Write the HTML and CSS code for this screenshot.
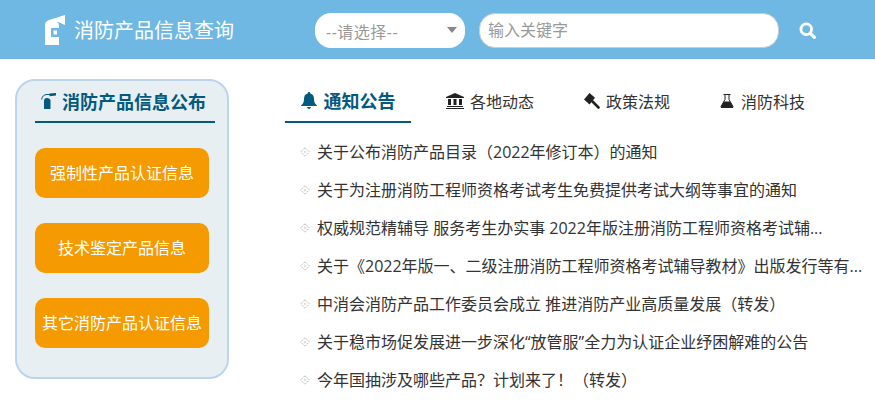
FILE: index.html
```html
<!DOCTYPE html>
<html lang="zh-CN">
<head>
    <meta charset="UTF-8">
    <title>消防产品信息查询</title>
    <link rel="stylesheet" href="styles.css">
</head>
<body>
<svg class="defs" width="0" height="0">
    <symbol id="dot" viewBox="0 0 10 10">
        <path fill="none" stroke="#b5b5b5" stroke-dasharray="1.500 1" d="M5 .7L9.300 5 5 9.300 .7 5Z"/>
        <path fill="#ddd" d="M5 3.500L6.500 5 5 6.500 3.500 5Z"/>
    </symbol>
</svg>
<header class="header">
    <div class="logo">
        <svg class="logo-icon" width="20" height="30" viewBox="0 0 20 30">
            <path fill="#fff" d="M0 30V10Q0 6.500 4 5L20 0V10L12 6.500Q14 8 14 11V30Z"/>
            <path fill="#6fb8e3" d="M6 13H14V22H6Z"/>
            <path fill="#fff" d="M8.500 15.500H12V19.500H8.500Z"/>
        </svg>
        <span class="logo-text">消防产品信息查询</span>
    </div>
    <div class="select-box">
        <span>--请选择--</span>
        <i class="caret"></i>
    </div>
    <input class="search-input" type="text" placeholder="输入关键字">
    <svg class="search-icon" width="17" height="17" viewBox="0 0 16 16">
        <circle cx="6.800" cy="6.800" r="5" fill="none" stroke="#fff" stroke-width="2.600"/>
        <path d="M10.500 10.500L14.500 14.500" stroke="#fff" stroke-width="3" stroke-linecap="round"/>
    </svg>
</header>

<div class="content">
    <aside class="side-card">
        <h2 class="side-title">
            <svg width="15" height="17" viewBox="0 0 15 17">
                <path fill="#04597f" d="M3 16V7.500Q3 5 6 5T9.500 7.500V16Z"/>
                <path fill="none" stroke="#04597f" d="M.6 6.500Q1.500 1.500 6 1.500H9"/>
                <path fill="#04597f" d="M8.500 .5L15 0V2.500L8.500 3.200Z"/>
            </svg>
            消防产品信息公布
        </h2>
        <a class="side-btn">强制性产品认证信息</a>
        <a class="side-btn">技术鉴定产品信息</a>
        <a class="side-btn">其它消防产品认证信息</a>
    </aside>

    <main class="main">
        <nav class="tabs">
            <a class="tab active">
                <svg width="16" height="17" viewBox="0 0 16 17">
                    <path fill="#04597f" d="M8 0Q9.300 0 9.300 1.400Q13 2.200 13 7Q13 11.500 16 13.500V14H0V13.500Q3 11.500 3 7Q3 2.200 6.700 1.400Q6.700 0 8 0ZM6 15H10Q9.500 17 8 17T6 15Z"/>
                </svg>
                通知公告
            </a>
            <a class="tab tab-2">
                <svg width="18" height="16" viewBox="0 0 18 16">
                    <path fill="#222" d="M9 0L18 4V5H0V4ZM2 6H5V12H2ZM7.500 6H10.500V12H7.500ZM13 6H16V12H13ZM1 13H17V14H1ZM0 15H18V16H0Z"/>
                </svg>
                各地动态
            </a>
            <a class="tab tab-3">
                <svg width="16" height="16" viewBox="0 0 16 16">
                    <path fill="#222" d="M0 6.500L5.500 0 11 4.800 5.500 11.500Z"/>
                    <path fill="none" stroke="#222" stroke-width="2.600" stroke-linecap="round" d="M8.500 8.500L14.500 14.500"/>
                </svg>
                政策法规
            </a>
            <a class="tab tab-4">
                <svg width="14" height="14" viewBox="0 0 14 14">
                    <path fill="none" stroke="#222" d="M3.500 .5H10.500M5 1V5.500L1 12.500Q.8 13.500 1.500 13.500H12.500Q13.200 13.500 13 12.500L9 5.500V1"/>
                    <path fill="#222" d="M3.800 7.500H10.200L13 13V14H1V13Z"/>
                </svg>
                消防科技
            </a>
        </nav>
        <ul class="news">
            <li><svg class="dot"><use href="#dot"/></svg><a>关于公布消防产品目录（2022年修订本）的通知</a></li>
            <li><svg class="dot"><use href="#dot"/></svg><a>关于为注册消防工程师资格考试考生免费提供考试大纲等事宜的通知</a></li>
            <li><svg class="dot"><use href="#dot"/></svg><a>权威规范精辅导 服务考生办实事 2022年版注册消防工程师资格考试辅...</a></li>
            <li><svg class="dot"><use href="#dot"/></svg><a>关于《2022年版一、二级注册消防工程师资格考试辅导教材》出版发行等有...</a></li>
            <li><svg class="dot"><use href="#dot"/></svg><a>中消会消防产品工作委员会成立 推进消防产业高质量发展（转发）</a></li>
            <li><svg class="dot"><use href="#dot"/></svg><a>关于稳市场促发展进一步深化“放管服”全力为认证企业纾困解难的公告</a></li>
            <li><svg class="dot"><use href="#dot"/></svg><a>今年国抽涉及哪些产品？计划来了！（转发）</a></li>
        </ul>
    </main>
</div>
</body>
</html>
```

FILE: styles.css
```css
* {
    box-sizing: border-box;
}
html, body {
    height: 100%;
    overflow: hidden;
}
body {
    margin: 0;
    background-color: #fff;
    font-family: "Open Sans", "Noto Sans CJK SC", sans-serif;
    color: #333;
}
.defs {
    display: block;
}
.header {
    display: flex;
    align-items: center;
    height: 59px;
    background-color: #6fb8e3;
}
.logo {
    display: flex;
    align-items: center;
    width: 315px;
    padding-left: 45px;
    color: #fff;
}
.logo-icon {
    margin-right: 9px;
}
.logo-text {
    font-size: 20px;
    margin-top: -1px;
}
.select-box {
    position: relative;
    display: flex;
    align-items: center;
    width: 150px;
    height: 35px;
    padding: 2px 0 0 11px;
    margin-top: 1px;
    background-color: #fff;
    border-radius: 16px;
    font-size: 16px;
    letter-spacing: .5px;
    color: #999;
}
.caret {
    position: absolute;
    right: 8px;
    top: 14px;
    border-left: 5px solid transparent;
    border-right: 5px solid transparent;
    border-top: 6px solid #888;
}
.search-input {
    width: 300px;
    height: 35px;
    margin-left: 14px;
    margin-top: 1px;
    padding: 0 8px;
    border: 1px solid #ccc;
    border-radius: 16px;
    outline: none;
    font-family: inherit;
    font-size: 16px;
    color: #555;
}
.search-input::placeholder {
    color: #999;
}
.search-icon {
    margin-left: 20px;
    margin-top: 2px;
}
.content {
    display: flex;
    align-items: flex-start;
    padding: 20px 0 0 15px;
}
.side-card {
    flex: none;
    width: 214px;
    height: 300px;
    padding: 0 18px;
    background-color: #e8eff3;
    border: 2px solid #bcd5e8;
    border-radius: 20px;
}
.side-title {
    display: flex;
    align-items: center;
    justify-content: center;
    gap: 6px;
    height: 42px;
    width: 180px;
    margin: 0 0 25px;
    padding-right: 3px;
    border-bottom: 2px solid #04597f;
    font-size: 18px;
    font-weight: bold;
    color: #04597f;
    white-space: nowrap;
}
.side-btn {
    display: flex;
    align-items: center;
    justify-content: center;
    width: 174px;
    height: 50px;
    margin-bottom: 25px;
    padding-bottom: 2px;
    background-color: #f59a00;
    border-radius: 10px;
    font-size: 16px;
    color: #fff;
    white-space: nowrap;
}
.main {
    flex: 1;
    margin-left: 56px;
    min-width: 0;
}
.tabs {
    display: flex;
    height: 44px;
}
.tab {
    display: flex;
    align-items: center;
    height: 44px;
    gap: 7px;
    font-size: 16px;
    color: #333;
    white-space: nowrap;
}
.tab.active {
    width: 126px;
    justify-content: center;
    border-bottom: 2px solid #04597f;
    font-size: 18px;
    font-weight: bold;
    color: #04597f;
}
.tab-2 {
    margin-left: 35px;
    gap: 6px;
}
.tab-3 {
    margin-left: 50px;
    gap: 6px;
}
.tab-4 {
    margin-left: 50px;
}
.news {
    list-style: none;
    margin: 9px 0 0;
    padding: 0 0 0 15px;
}
.news li {
    display: flex;
    align-items: center;
    height: 38px;
    font-size: 16px;
    color: #333;
    white-space: nowrap;
}
.dot {
    flex: none;
    width: 10px;
    height: 10px;
    margin: 2px 7px 0 0;
}
```
